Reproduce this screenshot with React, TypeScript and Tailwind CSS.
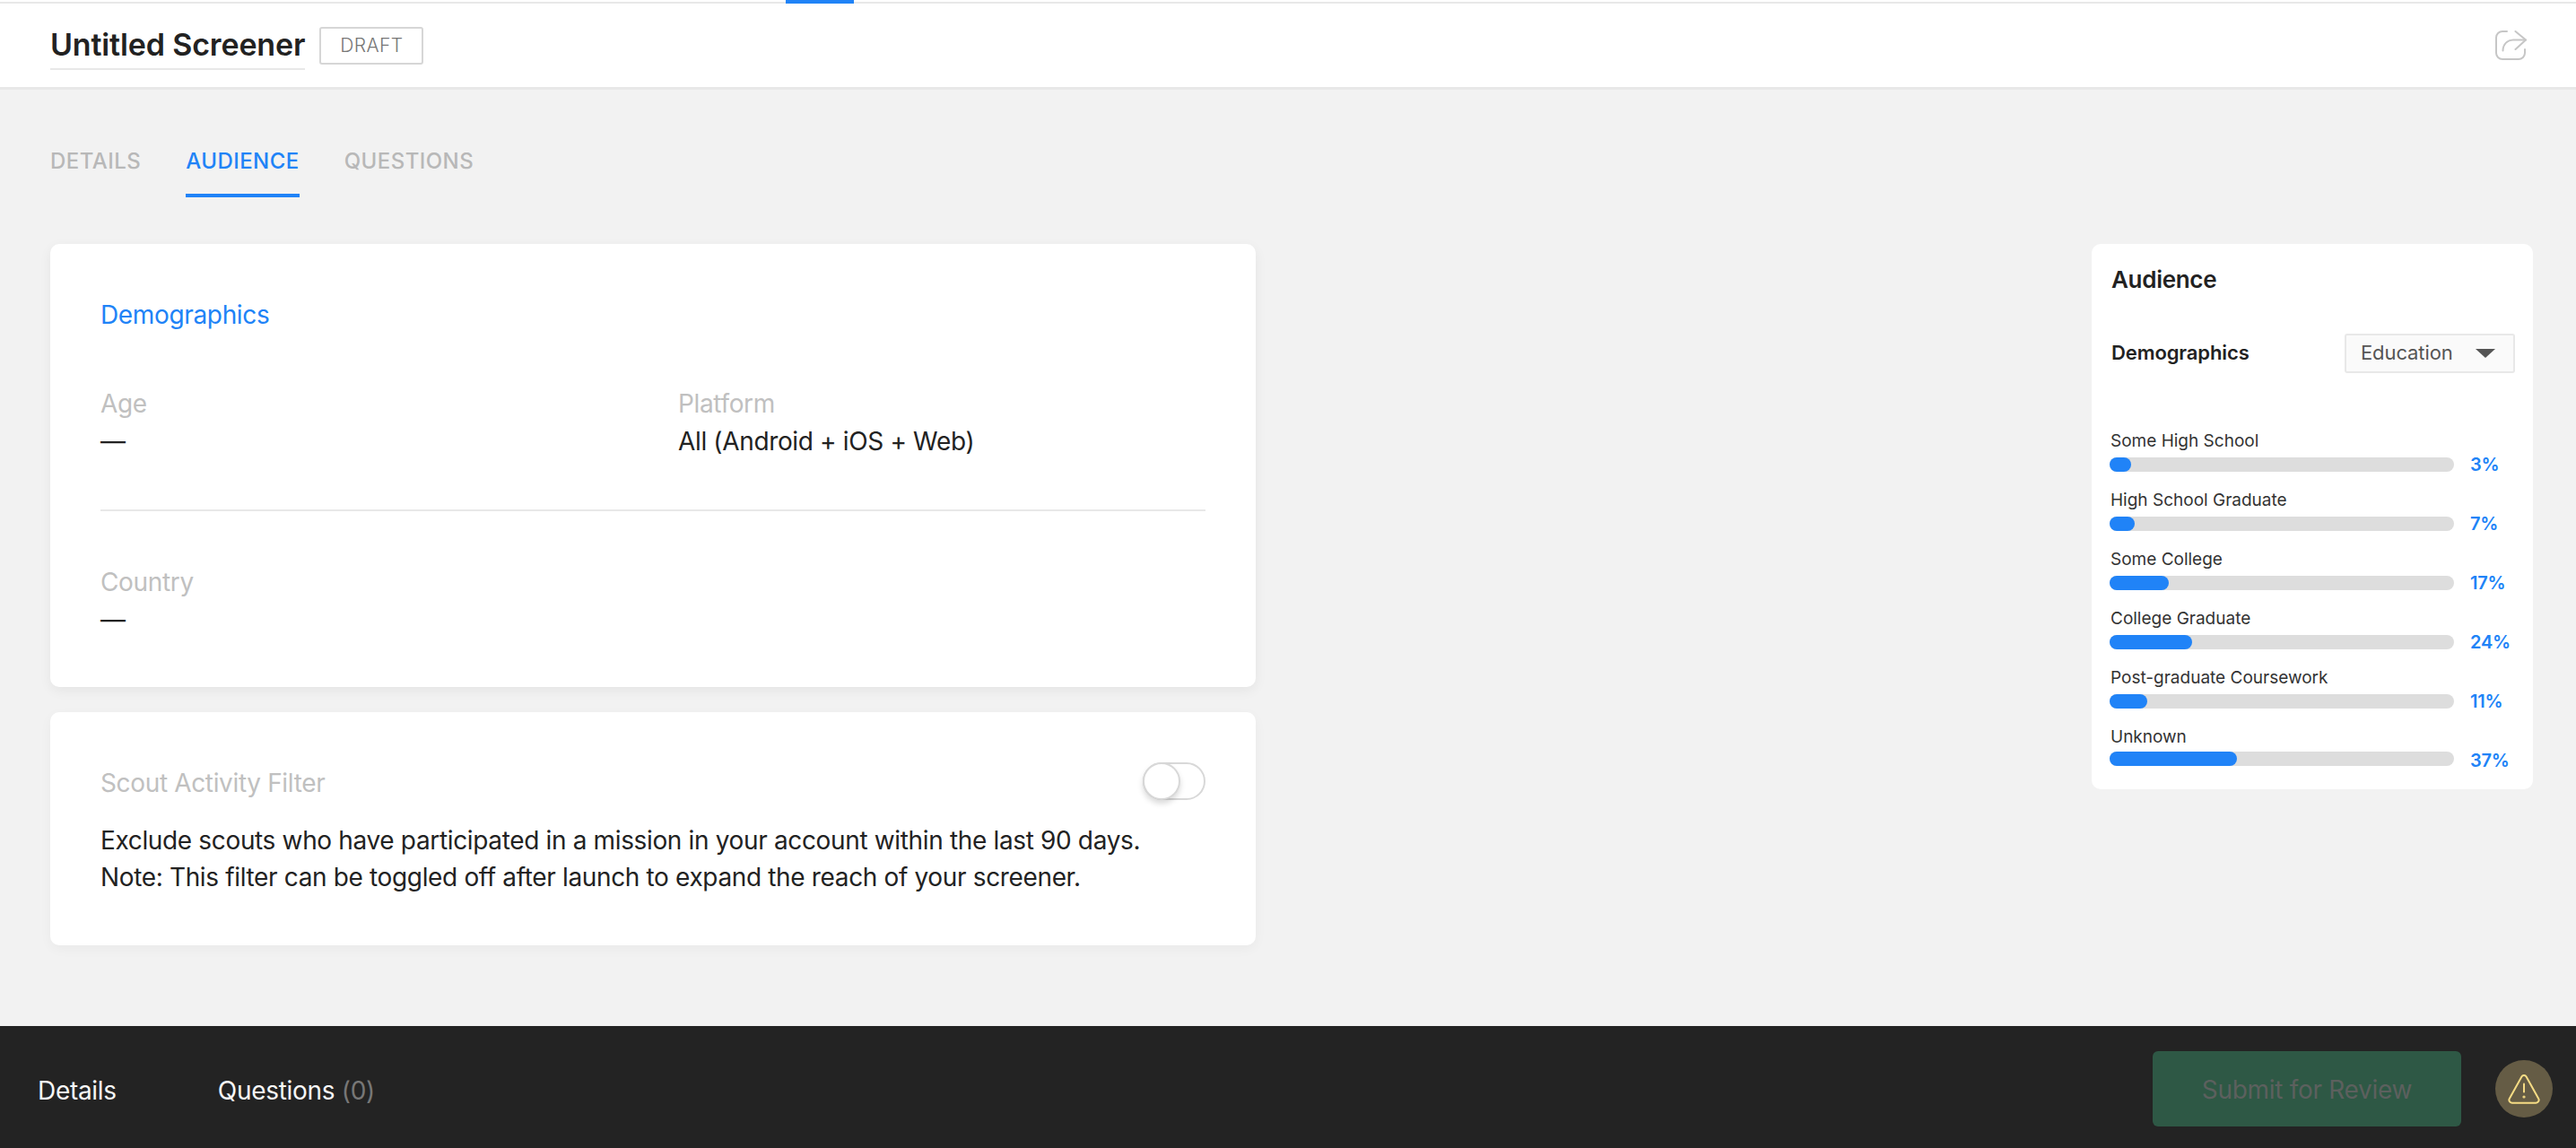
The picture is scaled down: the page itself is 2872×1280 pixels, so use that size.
const rows = [
  { label: "Some High School", pct: 3, width: 24 },
  { label: "High School Graduate", pct: 7, width: 28 },
  { label: "Some College", pct: 17, width: 66 },
  { label: "College Graduate", pct: 24, width: 92 },
  { label: "Post-graduate Coursework", pct: 11, width: 42 },
  { label: "Unknown", pct: 37, width: 142 },
]

function ShareIcon() {
  return (
    <svg width="35" height="33" viewBox="0 0 35 33" fill="none" stroke="#c6c6c6" strokeWidth="2" strokeLinecap="round" strokeLinejoin="round">
      <path d="M13 1H8a7 7 0 0 0-7 7v17a7 7 0 0 0 7 7h18a7 7 0 0 0 7-7v-4" />
      <path d="M22.5 1 34 10.5 22.5 21" />
      <path d="M34 10.5H20c-6.5 0-11.5 5-11.500 12" />
    </svg>
  )
}

function WarningIcon() {
  return (
    <svg width="36" height="33" viewBox="0 0 36 33" fill="none" stroke="#f6dc84" strokeWidth="2" strokeLinecap="round" strokeLinejoin="round">
      <path d="M15.4 2.4 1.900 26.800a3.200 3.200 0 0 0 2.800 4.900h26.600a3.200 3.200 0 0 0 2.800-4.900L20.600 2.400a3 3 0 0 0-5.200 0Z" />
      <path d="M18 10.500v9" />
      <circle cx="18" cy="25" r="0.6" fill="#f6dc84" />
    </svg>
  )
}

function AudienceRow({ label, pct, width, last }: { label: string; pct: number; width: number; last: boolean }) {
  return (
    <div className="mb-[19px] last:mb-0">
      <div className="ml-[1px] h-[26px] text-[19px] leading-[26px] text-[#333333]">{label}</div>
      <div className="mt-[5px] flex h-[16px] items-center">
        <div className={last ? "h-[16px] w-[384px] -translate-y-[2px] rounded-full bg-[#dddddd]" : "h-[16px] w-[384px] rounded-full bg-[#dddddd]"}>
          <div className="h-full rounded-full bg-[#2083f7]" style={{ width }} />
        </div>
        <span className="ml-[18px] text-[20px] font-semibold leading-[16px] tracking-[-0.2px] text-[#2083f7]">{pct}%</span>
      </div>
    </div>
  )
}

export default function App() {
  return (
    <div className="flex h-screen w-full flex-col overflow-hidden bg-[#f2f2f2] font-['Inter',sans-serif] text-[#222222]">
      <div className="relative h-[4px] border-b-2 border-[#e8e8e8] bg-white">
        <div className="absolute left-[876px] top-0 h-[4px] w-[76px] bg-[#2083f7]" />
      </div>

      <header className="flex h-[96px] items-start border-b-[3px] border-[#e8e8e8] bg-white pl-[56px] pr-[55px] pt-[26px]">
        <h1 className="h-[48px] border-b-2 border-[#e8e8e8] text-[34px] font-semibold leading-[40px] tracking-[-0.15px] text-[#222222]">Untitled Screener</h1>
        <div className="ml-[16px] flex h-[42px] w-[116px] items-center justify-center rounded-[3px] border-2 border-[#d6d6d6] text-[21px] font-light tracking-[0.4px] text-[#777777]">
          DRAFT
        </div>
        <button className="ml-auto mt-[4px]">
          <ShareIcon />
        </button>
      </header>

      <main className="flex-1 pl-[56px] pr-[48px] pt-[60px]">
        <nav className="flex gap-[50px] text-[24px] font-medium leading-[40px] tracking-[0.45px] text-[#b8b8b8]">
          <div className="h-[60px]">DETAILS</div>
          <div className="h-[60px] border-b-4 border-[#2083f7] text-[#2083f7]">AUDIENCE</div>
          <div className="h-[60px]">QUESTIONS</div>
        </nav>

        <div className="mt-[52px] flex items-start justify-between tracking-[-0.35px]">
          <div className="w-[1344px]">
            <section className="h-[494px] rounded-[10px] bg-white px-[56px] pt-[58px] shadow-[0_4px_14px_rgba(0,0,0,0.06)]">
              <h2 className="text-[28px] leading-[42px] text-[#2083f7]">Demographics</h2>
              <div className="mt-[57px] grid grid-cols-[644px_1fr] text-[28px] leading-[42px]">
                <div>
                  <div className="text-[#c0c0c0]">Age</div>
                  <div>—</div>
                </div>
                <div>
                  <div className="text-[#c0c0c0]">Platform</div>
                  <div>All (Android + iOS + Web)</div>
                </div>
              </div>
              <div className="mt-[55px] h-[2px] bg-[#e8e8e8]" />
              <div className="mt-[58px] text-[28px] leading-[42px]">
                <div className="text-[#c0c0c0]">Country</div>
                <div>—</div>
              </div>
            </section>

            <section className="mt-[28px] h-[260px] rounded-[10px] bg-white px-[56px] pt-[58px] shadow-[0_4px_14px_rgba(0,0,0,0.04)]">
              <div className="flex items-center justify-between">
                <span className="text-[28px] leading-[42px] text-[#c0c0c0]">Scout Activity Filter</span>
                <div className="-mt-[4px] h-[42px] w-[70px] rounded-full border-2 border-[#d8d8d8] bg-white">
                  <div className="-ml-[2px] -mt-[2px] h-[42px] w-[42px] rounded-full border-2 border-[#d8d8d8] bg-white shadow-[0_4px_6px_rgba(0,0,0,0.15)]" />
                </div>
              </div>
              <p className="mt-[23px] text-[28px] leading-[41px]">
                Exclude scouts who have participated in a mission in your account within the last 90 days.
                <br />
                Note: This filter can be toggled off after launch to expand the reach of your screener.
              </p>
            </section>
          </div>

          <aside className="h-[608px] w-[492px] rounded-[10px] bg-white pl-[20px] pt-[22px] tracking-normal">
            <h3 className="ml-[2px] text-[26px] font-semibold leading-[36px] tracking-[-0.3px]">Audience</h3>
            <div className="mt-[42px] flex h-[44px] items-center justify-between pr-[20px]">
              <span className="ml-[2px] -mt-[2px] text-[22px] font-semibold tracking-[-0.1px]">Demographics</span>
              <div className="flex h-[44px] w-[190px] items-center justify-between rounded-[3px] border-2 border-[#e8e8e8] bg-[#fafafa] pl-[16px] pr-[20px] text-[22px] tracking-[-0.1px] text-[#555555]">
                <span className="-mt-[2px]">Education</span>
                <div className="h-0 w-0 border-x-[11px] border-t-[10px] border-x-transparent border-t-[#555555]" />
              </div>
            </div>
            <div className="mt-[63px]">
              {rows.map((row, i) => (
                <AudienceRow key={row.label} label={row.label} pct={row.pct} width={row.width} last={i === rows.length - 1} />
              ))}
            </div>
          </aside>
        </div>
      </main>

      <footer className="flex h-[136px] items-center bg-[#232323] pl-[42px] pr-[26px] pt-[4px] text-[28px] tracking-[-0.3px] text-[#f6f6f6]">
        <span className="mt-[4px]">Details</span>
        <span className="ml-[113px] mt-[4px]">
          Questions <span className="text-[#777777]">(0)</span>
        </span>
        <button className="ml-auto flex h-[84px] w-[344px] items-center justify-center rounded-[6px] bg-[#2e5845] pt-[2px] text-[#5c605e]">
          Submit for Review
        </button>
        <div className="ml-[38px] flex h-[64px] w-[64px] items-center justify-center rounded-full bg-[#655c45]">
          <WarningIcon />
        </div>
      </footer>
    </div>
  )
}
